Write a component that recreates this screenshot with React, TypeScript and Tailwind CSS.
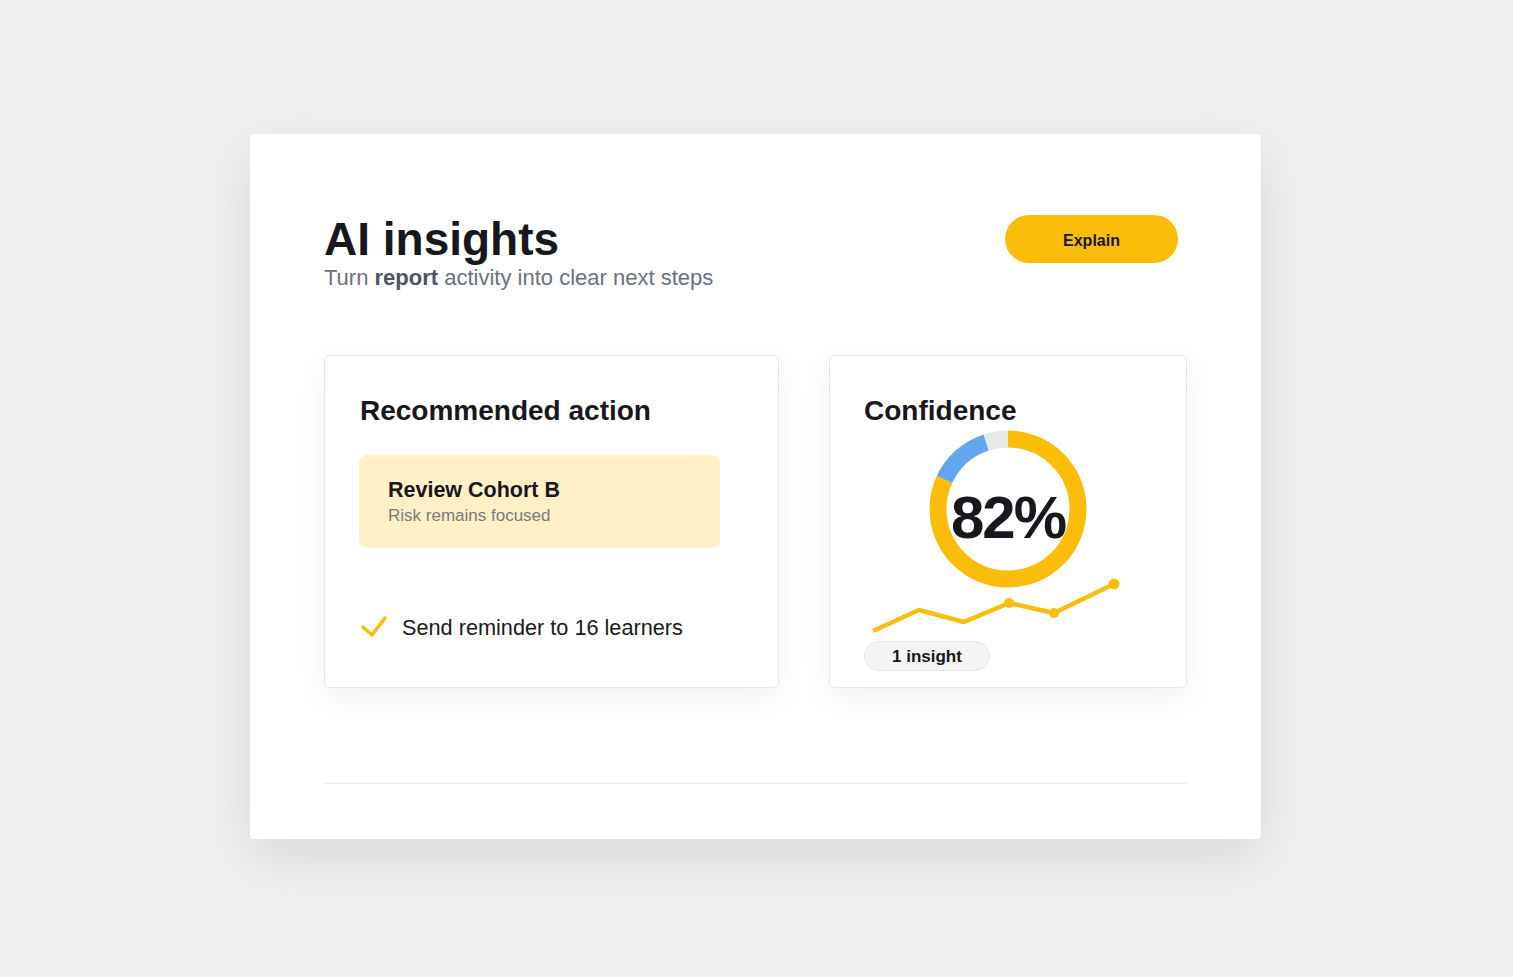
import React from "react";

const C = 2 * Math.PI * 70;

function Donut() {
  const seg = (start: number, len: number, color: string) => (
    <circle
      cx="80"
      cy="80"
      r="70"
      fill="none"
      stroke={color}
      strokeWidth="17"
      strokeDasharray={`${len * C} ${C}`}
      strokeDashoffset={-start * C}
      transform="rotate(-90 80 80)"
    />
  );
  return (
    <div className="relative mx-auto mt-[2px] h-[160px] w-[160px]">
      <svg width="160" height="160" viewBox="0 0 160 160">
        {seg(0, 0.818, "#fcbc0a")}
        {seg(0.818, 0.13, "#62a5f1")}
        {seg(0.948, 0.052, "#e6e8ea")}
      </svg>
      <div className="absolute inset-0 flex items-center justify-center pt-[18px] text-[60px] font-bold tracking-[-0.035em] text-[#16181d]">
        82%
      </div>
    </div>
  );
}

export default function App() {
  return (
    <div
      className="flex min-h-screen items-center justify-center bg-[#f1f0ef] pb-[4px] pr-[2px]"
      style={{ fontFamily: '"Liberation Sans", Arial, sans-serif' }}
    >
      <div className="w-[1011px] rounded-[4px] bg-white px-[74px] pb-[55px] pt-[80px] shadow-[0_18px_55px_rgba(0,0,0,0.10)]">
        <div className="flex items-start justify-between">
          <div>
            <h1 className="text-[46px] font-bold leading-[50px] text-[#16181d]">AI insights</h1>
            <p className="text-[22px] leading-[28px] text-[#6b7280]">
              Turn <span className="font-bold text-[#4b5563]">report</span> activity into clear next steps
            </p>
          </div>
          <button className="mr-[9px] mt-[1px] h-[48px] w-[173px] rounded-full bg-[#fcbc0a] pt-[3px] text-[16px] font-bold text-[#16181d]">
            Explain
          </button>
        </div>

        <div className="mt-[63px] flex gap-[50px]">
          <div className="w-[455px] rounded-[6px] border border-[#e6e6e6] bg-white px-[35px] pt-[38px] shadow-[0_10px_30px_rgba(0,0,0,0.06)]">
            <h2 className="text-[28px] font-bold leading-[33px] text-[#16181d]">Recommended action</h2>
            <div className="-ml-[1px] mt-[28px] w-[361px] rounded-[8px] bg-[#fff0c8] px-[29px] pb-[21px] pt-[23px]">
              <div className="text-[21.5px] font-bold leading-[24px] text-[#16181d]">Review Cohort B</div>
              <div className="mt-[3px] text-[17px] leading-[22px] text-[#7a7a7a]">Risk remains focused</div>
            </div>
            <div className="mt-[67px] flex items-center gap-[15px]">
              <svg width="26" height="22" viewBox="0 0 26 22" className="-mt-[2px] ml-[1px]">
                <polyline
                  points="2,11 11,19 24,2"
                  fill="none"
                  stroke="#fcbc0a"
                  strokeWidth="3.5"
                  strokeLinecap="round"
                  strokeLinejoin="round"
                />
              </svg>
              <span className="text-[21.7px] leading-[26px] text-[#1a1a1a]">Send reminder to 16 learners</span>
            </div>
          </div>

          <div className="w-[358px] rounded-[6px] border border-[#e6e6e6] bg-white px-[34px] pb-[16px] pt-[38px] shadow-[0_10px_30px_rgba(0,0,0,0.06)]">
            <h2 className="text-[28px] font-bold leading-[33px] text-[#16181d]">Confidence</h2>
            <Donut />
            <svg width="288" height="58" viewBox="0 0 288 58" className="-mt-[11px] block">
              <polyline
                points="9,53 55,32 100,44 145,25 190,35 250,6"
                fill="none"
                stroke="#fcbc0a"
                strokeWidth="4.5"
                strokeLinejoin="round"
              />
              <circle cx="145" cy="25" r="5" fill="#fcbc0a" />
              <circle cx="190" cy="35" r="5" fill="#fcbc0a" />
              <circle cx="250" cy="6" r="5.5" fill="#fcbc0a" />
            </svg>
            <div className="mt-[5px] inline-flex h-[30px] items-center rounded-full border border-[#e6e6e6] bg-[#f4f4f4] px-[27px] pt-[2px] text-[17px] font-bold text-[#16181d]">
              1 insight
            </div>
          </div>
        </div>

        <div className="mt-[95px] h-px bg-[#ececec]" />
      </div>
    </div>
  );
}
